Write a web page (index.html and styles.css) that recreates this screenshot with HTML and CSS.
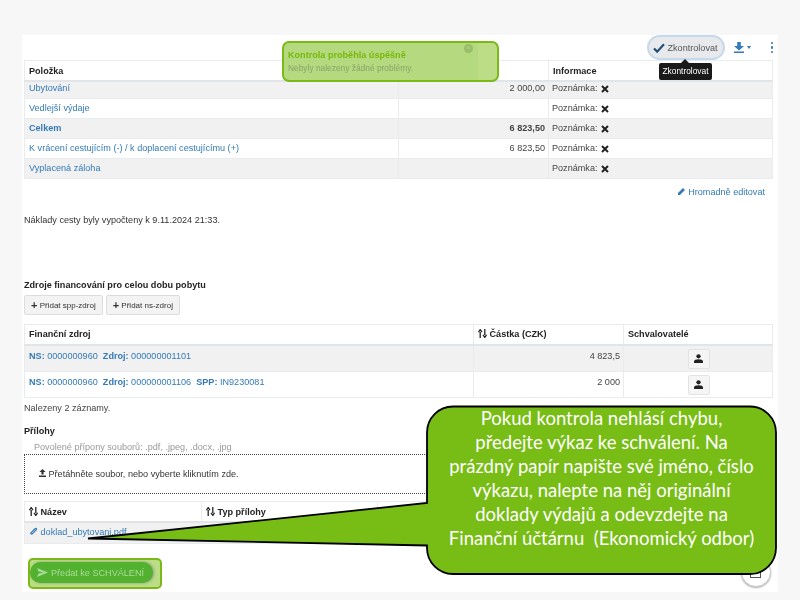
FILE: index.html
```html
<!DOCTYPE html>
<html lang="cs">
<head>
    <meta charset="UTF-8">
    <meta name="viewport" content="width=device-width, initial-scale=1.0">
    <title>Výkaz cesty</title>
    <link rel="stylesheet" href="styles.css">
</head>
<body>
    <svg class="defs" width="0" height="0">
        <symbol id="ico-x" viewBox="0 0 8 8"><path d="M1 1l6 6M7 1L1 7" fill="none" stroke="#222" stroke-width="2"/></symbol>
        <symbol id="ico-sort" viewBox="0 0 9 9"><path d="M2.200 9V3M.4 3.200L2.200.6 4 3.200M6.800 0v6M5 5.800l1.800 2.600 1.800-2.600" fill="none" stroke="#222" stroke-width="1.300"/></symbol>
        <symbol id="ico-user" viewBox="0 0 10 10"><circle cx="5" cy="2.600" r="2.400" fill="#222"/><path d="M0 10V8.200C0 6.600 2 5.800 5 5.800s5 .8 5 2.400V10z" fill="#222"/></symbol>
    </svg>

    <div class="panel">
        <div class="toolbar">
            <button class="btn-check">
                <svg width="12" height="10" viewBox="0 0 13 11"><path d="M1 6l3.500 3.500L12 1.500" fill="none" stroke="#1f4e79" stroke-width="2.400"/></svg>
                Zkontrolovat
            </button>
            <span class="download">
                <svg width="10" height="11" viewBox="0 0 10 11"><path d="M3.200 0h3.600v4H10L5 8.400 0 4h3.200zM0 9.400h10V11H0z" fill="#337ab7"/></svg>
                <span class="caret"></span>
            </span>
            <span class="kebab"><i></i><i></i><i></i></span>
        </div>

        <table class="grid costs">
            <thead>
                <tr><th class="c1">Položka</th><th class="c2"></th><th>Informace</th></tr>
            </thead>
            <tbody>
                <tr><td><a href="#">Ubytování</a></td><td class="num">2 000,00</td><td class="note">Poznámka: <svg class="x" width="8" height="8"><use href="#ico-x"/></svg></td></tr>
                <tr><td><a href="#">Vedlejší výdaje</a></td><td class="num"></td><td class="note">Poznámka: <svg class="x" width="8" height="8"><use href="#ico-x"/></svg></td></tr>
                <tr><td><a href="#"><b>Celkem</b></a></td><td class="num"><b>6 823,50</b></td><td class="note">Poznámka: <svg class="x" width="8" height="8"><use href="#ico-x"/></svg></td></tr>
                <tr><td><a href="#">K vrácení cestujícím (-) / k doplacení cestujícímu (+)</a></td><td class="num">6 823,50</td><td class="note">Poznámka: <svg class="x" width="8" height="8"><use href="#ico-x"/></svg></td></tr>
                <tr><td><a href="#">Vyplacená záloha</a></td><td class="num"></td><td class="note">Poznámka: <svg class="x" width="8" height="8"><use href="#ico-x"/></svg></td></tr>
            </tbody>
        </table>

        <div class="bulk">
            <a href="#">
                <svg width="8" height="8" viewBox="0 0 9 9"><path d="M0 9V6.800L5.600 1.200l2.200 2.200L2.200 9z" fill="#337ab7"/></svg>
                Hromadně editovat
            </a>
        </div>

        <p class="computed">Náklady cesty byly vypočteny k 9.11.2024 21:33.</p>

        <h4 class="sources-title">Zdroje financování pro celou dobu pobytu</h4>
        <div class="add-row">
            <button class="btn-add"><span class="plus">+</span> Přidat spp-zdroj</button>
            <button class="btn-add"><span class="plus">+</span> Přidat ns-zdroj</button>
        </div>

        <table class="grid sources">
            <thead>
                <tr><th class="s1">Finanční zdroj</th><th class="s2"><svg class="sort" width="9" height="9"><use href="#ico-sort"/></svg> Částka (CZK)</th><th>Schvalovatelé</th></tr>
            </thead>
            <tbody>
                <tr>
                    <td><a href="#"><b>NS:</b> 0000000960 &nbsp;<b>Zdroj:</b> 000000001101</a></td>
                    <td class="num">4 823,5</td>
                    <td class="center"><button class="btn-user"><svg width="9" height="9"><use href="#ico-user"/></svg></button></td>
                </tr>
                <tr>
                    <td><a href="#"><b>NS:</b> 0000000960 &nbsp;<b>Zdroj:</b> 000000001106 &nbsp;<b>SPP:</b> IN9230081</a></td>
                    <td class="num">2 000</td>
                    <td class="center"><button class="btn-user"><svg width="9" height="9"><use href="#ico-user"/></svg></button></td>
                </tr>
            </tbody>
        </table>

        <p class="found">Nalezeny 2 záznamy.</p>

        <h4 class="att-title">Přílohy</h4>
        <div class="allowed">Povolené přípony souborů: .pdf, .jpeg, .docx, .jpg</div>
        <div class="dropzone">
            <svg width="7" height="8" viewBox="0 0 7 8"><path d="M3.500 0L6.600 3H4.600v2.400H2.400V3H.4zM0 6.600h7V8H0z" fill="#333"/></svg>
            Přetáhněte soubor, nebo vyberte kliknutím zde.
        </div>

        <table class="grid files">
            <thead>
                <tr><th class="f1"><svg class="sort" width="9" height="9"><use href="#ico-sort"/></svg> Název</th><th class="f2"><svg class="sort" width="9" height="9"><use href="#ico-sort"/></svg> Typ přílohy</th><th></th></tr>
            </thead>
            <tbody>
                <tr><td><a href="#"><svg class="clip" width="9" height="9" viewBox="0 0 9 9"><path d="M1.200 6.600L6 1.800c1-.9 2-.1 1.200 1L3.400 6.900c-.7.6-1.500.1-1-.7" fill="none" stroke="#337ab7" stroke-width="1.200"/></svg> doklad_ubytovani.pdf</a></td><td></td><td></td></tr>
            </tbody>
        </table>

        <div class="submit-row">
            <button class="btn-submit">
                <svg width="11" height="9" viewBox="0 0 11 9"><path d="M0 0l11 4.500L0 9l1.500-3.600 5-.9-5-.9z" fill="#a9dc9b"/></svg>
                Předat ke SCHVÁLENÍ
            </button>
        </div>
    </div>

    <div class="fab"><span class="fab-icon"></span></div>

    <div class="tooltip">Zkontrolovat</div>

    <div class="toast">
        <span class="toast-close">&#10005;</span>
        <div class="toast-title">Kontrola proběhla úspěšně</div>
        <div class="toast-text">Nebyly nalezeny žádné problémy.</div>
    </div>

    <svg class="callout-shape" width="800" height="600" viewBox="0 0 800 600">
        <path d="M453 406.500H750a26 26 0 0 1 26 26V548a26 26 0 0 1-26 26H453A26 26 0 0 1 427 548V545.500L88 538.500 427 503V432.500A26 26 0 0 1 453 406.500Z" fill="#78bd15" stroke="#000" stroke-width="1.800"/>
    </svg>
    <div class="callout-text">
        Pokud kontrola nehlásí chybu,<br>
        předejte výkaz ke schválení. Na<br>
        prázdný papír napište své jméno, číslo<br>
        výkazu, nalepte na něj originální<br>
        doklady výdajů a odevzdejte na<br>
        Finanční účtárnu &nbsp;(Ekonomický odbor)
    </div>
</body>
</html>
```

FILE: styles.css
```css
html, body {
    height: 600px;
    overflow: hidden;
}
body {
    font-family: "Liberation Sans", Arial, sans-serif;
    font-size: 9.1px;
    color: #444;
    background-color: #f7f7f7;
    margin: 0;
    padding: 35px 22px 8px;
    box-sizing: border-box;
}
a {
    color: #337ab7;
    text-decoration: none;
}
.defs {
    position: absolute;
}
/* screenshot je zmenseny, proto mirne rozmazani */
.panel, .fab, .tooltip, .toast {
    filter: blur(0.35px);
}
.panel {
    background: white;
    height: 557px;
    padding: 0 5px 0 2px;
    box-sizing: border-box;
}
.toolbar {
    height: 25px;
    display: flex;
    align-items: center;
    justify-content: flex-end;
}
.btn-check {
    display: flex;
    align-items: center;
    gap: 3px;
    height: 25px;
    width: 78px;
    padding: 0 0 0 4px;
    margin-right: 9px;
    font: 9.1px "Liberation Sans", Arial, sans-serif;
    color: #555;
    background: #e7e9ec;
    border: 2px solid #c6d9ec;
    border-radius: 13px;
    box-sizing: border-box;
}
.download {
    display: flex;
    align-items: center;
    gap: 3px;
    margin-right: 20px;
}
.caret {
    border-left: 2.5px solid transparent;
    border-right: 2.5px solid transparent;
    border-top: 3px solid #337ab7;
}
.kebab {
    display: flex;
    flex-direction: column;
    gap: 2px;
}
.kebab i {
    width: 2.5px;
    height: 2.5px;
    background: #337ab7;
    border-radius: 50%;
}
.grid {
    width: 749px;
    border-collapse: collapse;
    table-layout: fixed;
}
.grid th, .grid td {
    border: 1px solid #e9ecef;
    padding: 0 3px 0 4px;
    text-align: left;
    vertical-align: top;
    overflow: hidden;
    white-space: nowrap;
}
.grid th {
    color: #222;
    font-weight: bold;
    border-bottom: 2px solid #e1e5ea;
}
.grid tbody tr:nth-child(odd) td {
    background: #f1f1f1;
}
.grid td.num {
    text-align: right;
}
.costs th {
    height: 17px;
    padding-top: 1px;
    line-height: 18px;
}
.costs td {
    height: 19px;
    line-height: 19px;
}
.costs tbody tr:first-child td {
    height: 16px;
    line-height: 12px;
}
.c1 {
    width: 366px;
}
.c2 {
    width: 142px;
}
.grid td.note {
    padding-left: 3px;
}
.note .x {
    margin-left: 1px;
    vertical-align: -2px;
}
.bulk {
    text-align: right;
    margin-top: 7px;
    padding-right: 8px;
    line-height: 12px;
}
.computed {
    margin: 16px 0 0;
    line-height: 12px;
    color: #333;
}
.sources-title {
    margin: 53px 0 0;
    font-size: 9.1px;
    line-height: 12px;
    color: #222;
}
.add-row {
    display: flex;
    gap: 3px;
    margin-top: 4px;
}
.btn-add {
    height: 20px;
    padding: 0 6px;
    font: 8px "Liberation Sans", Arial, sans-serif;
    color: #333;
    background: #f3f3f3;
    border: 1px solid #ddd;
    border-radius: 2px;
}
.plus {
    font-weight: bold;
    font-size: 11px;
    line-height: 10px;
    vertical-align: -1px;
}
.sources {
    margin-top: 9px;
}
.sources th {
    height: 18px;
    line-height: 19px;
}
.sources td {
    height: 25px;
    line-height: 21px;
}
.s1 {
    width: 441px;
}
.s2 {
    width: 142px;
}
.sort {
    vertical-align: -1px;
}
.grid td.center {
    text-align: center;
    vertical-align: middle;
}
.btn-user {
    display: block;
    margin: 0 auto;
    width: 22px;
    height: 20px;
    padding: 0;
    background: #f5f5f5;
    border: 1px solid #e3e3e3;
    border-radius: 2px;
}
.found {
    margin: 4px 0 0;
    line-height: 12px;
}
.att-title {
    margin: 11px 0 0;
    font-size: 9.1px;
    line-height: 12px;
    color: #222;
}
.allowed {
    margin: 4px 0 0 10px;
    line-height: 12px;
    color: #999;
}
.dropzone {
    height: 40px;
    margin-top: 1px;
    padding-left: 14px;
    line-height: 38px;
    color: #333;
    border: 1px dotted #444;
    box-sizing: border-box;
}
.files {
    margin-top: 7px;
}
.files th {
    height: 17px;
    padding-top: 1px;
    line-height: 18px;
}
.files td {
    height: 20px;
    line-height: 19px;
}
.f1 {
    width: 169px;
}
.f2 {
    width: 168px;
}
.clip {
    vertical-align: -1px;
}
.submit-row {
    width: 134px;
    height: 31px;
    margin: 14px 0 0 4px;
    padding: 2px 0 0;
    box-sizing: border-box;
    background: #bbdd85;
    border: 2px solid #7ab916;
    border-radius: 5px;
}
.btn-submit {
    display: flex;
    align-items: center;
    gap: 3px;
    width: 123px;
    height: 21px;
    padding: 0 7px;
    font: 9.1px "Liberation Sans", Arial, sans-serif;
    white-space: nowrap;
    color: #a9dc9b;
    background: #52b12e;
    border: none;
    border-radius: 11px;
    box-shadow: 1px 0 3px #8a9a80;
}

/* prekryvne prvky */
.fab {
    position: absolute;
    left: 741px;
    top: 557px;
    width: 28px;
    height: 28px;
    background: white;
    border: 1px solid #ccc;
    border-radius: 50%;
    box-shadow: 0 1px 2px #aaa;
}
.fab-icon {
    position: absolute;
    left: 8px;
    top: 9px;
    width: 9px;
    height: 9px;
    border: 1px solid #555;
}
.tooltip {
    position: absolute;
    left: 659px;
    top: 63px;
    width: 53px;
    height: 17px;
    line-height: 17px;
    text-align: center;
    font-size: 8.4px;
    color: white;
    background: #1a1a1a;
    border-radius: 2px;
}
.tooltip::before {
    content: "";
    position: absolute;
    left: 22px;
    top: -4px;
    border-left: 4px solid transparent;
    border-right: 4px solid transparent;
    border-bottom: 4px solid #1a1a1a;
}
.toast {
    position: absolute;
    left: 282px;
    top: 41px;
    width: 217px;
    height: 41px;
    padding: 6px 0 0 4px;
    box-sizing: border-box;
    background: linear-gradient(to right, #b4d97e 194px, #bcdd85 194px);
    border: 2px solid #7ab916;
    border-radius: 7px;
}
.toast-close {
    position: absolute;
    left: 180px;
    top: 1px;
    width: 9px;
    height: 9px;
    line-height: 9px;
    text-align: center;
    font-size: 6px;
    color: #b5d97f;
    background: #98bd6b;
    border-radius: 50%;
}
.toast-title {
    font-weight: bold;
    color: #78b80c;
    line-height: 12px;
}
.toast-text {
    margin-top: 2px;
    font-size: 8.4px;
    line-height: 11px;
    color: #89a36a;
}
.callout-shape {
    position: absolute;
    left: 0;
    top: 0;
    pointer-events: none;
}
.callout-text {
    position: absolute;
    left: 428px;
    top: 406px;
    width: 347px;
    text-align: center;
    font-family: Lato, "Open Sans", sans-serif;
    font-size: 18.5px;
    line-height: 24px;
    color: white;
}
```
